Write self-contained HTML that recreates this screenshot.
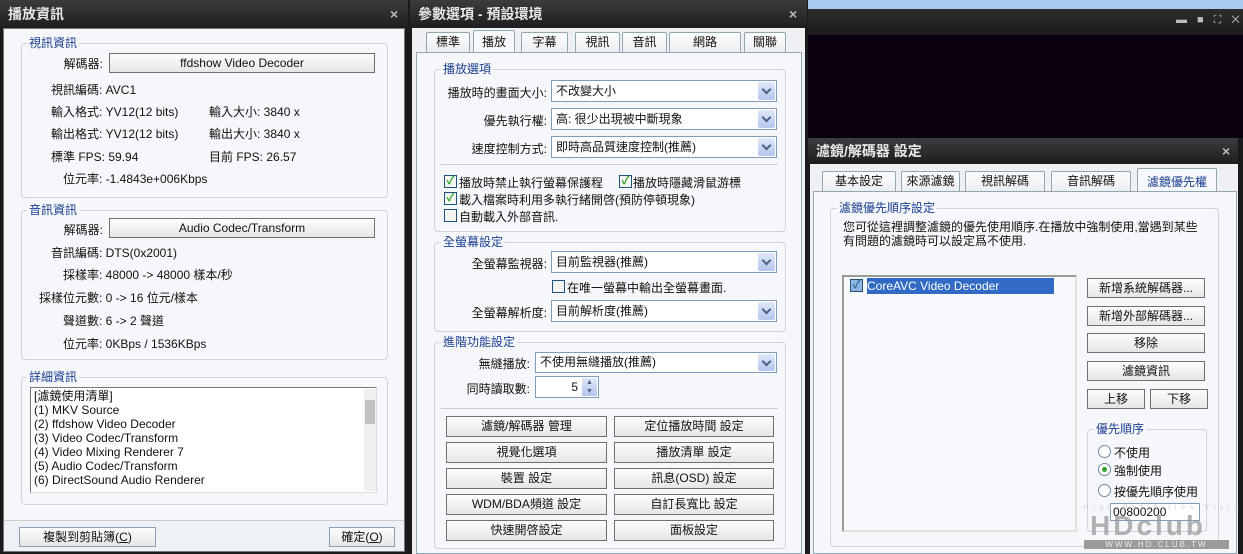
<!DOCTYPE html>
<html><head><meta charset="utf-8"><style>
*{box-sizing:border-box;margin:0;padding:0}
body{width:1243px;height:554px;overflow:hidden;position:relative;background:#1a1a1c;font-family:"Liberation Sans","Noto Sans CJK TC",sans-serif;font-size:12px;color:#111}
.a{position:absolute;white-space:nowrap}
.title{position:absolute;background:linear-gradient(#3c3c3e,#1e1e20);color:#e8e8e8;font-weight:bold;font-size:14px;padding-left:8px;line-height:26px}
.x{position:absolute;color:#bbb;font-size:14px;font-weight:bold}
.body{position:absolute;background:#f5f7fb}
.grp{position:absolute;border:1px solid #cfd3da;border-radius:4px}
.gl{position:absolute;background:#f5f7fb;color:#1b3f8f;padding:0 2px;line-height:14px;white-space:nowrap}
.btn{position:absolute;background:linear-gradient(#fcfcfc,#e6e6e6);border:1px solid #707070;text-align:center;white-space:nowrap;color:#111}
.cb{position:absolute;background:#fff;border:1px solid #7f9db9;padding-left:4px;white-space:nowrap}
.cb i{position:absolute;right:1px;top:1px;bottom:1px;width:17px;background:linear-gradient(#e0e8f8,#b4c6ee);border-radius:2px;font-style:normal}
.cb i:after{content:"";position:absolute;left:5px;top:4px;width:5px;height:5px;border-right:2px solid #4d6185;border-bottom:2px solid #4d6185;transform:rotate(45deg)}
.cb b{position:absolute;right:1px;top:1px;bottom:1px;width:15px;background:linear-gradient(#e0e8f8,#b4c6ee);font-size:7px;line-height:9px;text-align:center;color:#4d6185;font-weight:normal}
.chk{position:absolute;width:13px;height:13px;border:1px solid #1c5180;background:#f4f4f0;font-size:11px;line-height:11px;color:#21a121;text-align:center;font-weight:bold}
.lbl{position:absolute;text-align:right;white-space:nowrap}
.tab{position:absolute;border:1px solid #91a7b4;border-bottom:none;background:linear-gradient(#fdfdfd,#eceef2);text-align:center;line-height:19px;font-size:12px;border-radius:2px 2px 0 0}
.sep{position:absolute;height:1px;background:#c8ccd4}
.r{position:absolute;width:13px;height:13px;border-radius:50%;border:1px solid #6f8aa6;background:#fff}
</style></head><body>

<!-- Window 1 -->
<div class="title" style="left:0;top:0;width:408px;height:28px;line-height:28px">播放資訊</div>
<div class="x" style="left:390px;top:6px">×</div>
<div class="body" style="left:3px;top:28px;width:402px;height:524px;border:1px solid #777"></div>
<div class="grp" style="left:21px;top:43px;width:367px;height:155px"></div>
<div class="gl" style="left:27px;top:36px">視訊資訊</div>
<div class="lbl" style="left:40px;width:63px;top:55px">解碼器:</div>
<div class="btn" style="left:109px;top:53px;width:266px;height:20px;line-height:18px">ffdshow Video Decoder</div>
<div class="a" style="left:51px;top:81px">視訊編碼: AVC1</div>
<div class="a" style="left:51px;top:103px">輸入格式: YV12(12 bits)</div>
<div class="a" style="left:209px;top:103px">輸入大小: 3840 x</div>
<div class="a" style="left:51px;top:125px">輸出格式: YV12(12 bits)</div>
<div class="a" style="left:209px;top:125px">輸出大小: 3840 x</div>
<div class="a" style="left:51px;top:148px">標準 FPS: 59.94</div>
<div class="a" style="left:209px;top:148px">目前 FPS: 26.57</div>
<div class="a" style="left:63px;top:170px">位元率: -1.4843e+006Kbps</div>

<div class="grp" style="left:21px;top:210px;width:367px;height:150px"></div>
<div class="gl" style="left:27px;top:203px">音訊資訊</div>
<div class="lbl" style="left:40px;width:63px;top:221px">解碼器:</div>
<div class="btn" style="left:109px;top:218px;width:266px;height:20px;line-height:18px">Audio Codec/Transform</div>
<div class="a" style="left:51px;top:244px">音訊編碼: DTS(0x2001)</div>
<div class="a" style="left:63px;top:266px">採樣率: 48000 -&gt; 48000 樣本/秒</div>
<div class="a" style="left:39px;top:289px">採樣位元數: 0 -&gt; 16 位元/樣本</div>
<div class="a" style="left:63px;top:312px">聲道數: 6 -&gt; 2 聲道</div>
<div class="a" style="left:63px;top:335px">位元率: 0KBps / 1536KBps</div>

<div class="grp" style="left:21px;top:377px;width:367px;height:128px"></div>
<div class="gl" style="left:27px;top:370px">詳細資訊</div>
<div class="a" style="left:30px;top:387px;width:347px;height:106px;background:#fff;border:1px solid #7a7a7a;border-right-color:#ddd;border-bottom-color:#ddd"></div>
<div class="a" style="left:364px;top:389px;width:12px;height:102px;background:#f0f0f0"></div>
<div class="a" style="left:365px;top:400px;width:10px;height:24px;background:#c0c0c0"></div>
<div class="a" style="left:34px;top:389px;line-height:14px">[濾鏡使用清單]<br>(1) MKV Source<br>(2) ffdshow Video Decoder<br>(3) Video Codec/Transform<br>(4) Video Mixing Renderer 7<br>(5) Audio Codec/Transform<br>(6) DirectSound Audio Renderer</div>
<div class="a" style="left:4px;top:520px;width:400px;height:31px;background:#eef1f6;border-top:1px solid #ccc"></div>
<div class="btn" style="left:19px;top:527px;width:137px;height:20px;line-height:18px;border-color:#8a9fb5">複製到剪貼簿(<u>C</u>)</div>
<div class="btn" style="left:329px;top:527px;width:66px;height:20px;line-height:18px;border-color:#8a9fb5">確定(<u>O</u>)</div>

<!-- Window 2 -->
<div class="title" style="left:410px;top:0;width:397px;height:28px;line-height:28px">參數選項 - 預設環境</div>
<div class="x" style="left:789px;top:6px">×</div>
<div class="body" style="left:412px;top:28px;width:393px;height:526px;background:#eef0f4"></div>
<div class="tab" style="left:426px;top:32px;width:44px">標準</div>
<div class="tab" style="left:473px;top:30px;width:42px;height:23px;background:#f7f8fb;line-height:23px">播放</div>
<div class="tab" style="left:521px;top:32px;width:47px">字幕</div>
<div class="tab" style="left:575px;top:32px;width:45px">視訊</div>
<div class="tab" style="left:622px;top:32px;width:45px">音訊</div>
<div class="tab" style="left:669px;top:32px;width:72px">網路</div>
<div class="tab" style="left:744px;top:32px;width:42px">關聯</div>
<div class="body" style="left:416px;top:52px;width:386px;height:502px;border:1px solid #91a7b4"></div>

<div class="grp" style="left:434px;top:69px;width:352px;height:163px"></div>
<div class="gl" style="left:441px;top:62px">播放選項</div>
<div class="lbl" style="left:430px;width:117px;top:84px">播放時的畫面大小:</div>
<div class="cb" style="left:551px;top:80px;width:226px;height:22px;line-height:20px">不改變大小<i></i></div>
<div class="lbl" style="left:430px;width:117px;top:112px">優先執行權:</div>
<div class="cb" style="left:551px;top:108px;width:226px;height:22px;line-height:20px">高: 很少出現被中斷現象<i></i></div>
<div class="lbl" style="left:430px;width:117px;top:140px">速度控制方式:</div>
<div class="cb" style="left:551px;top:136px;width:226px;height:22px;line-height:20px">即時高品質速度控制(推薦)<i></i></div>
<div class="sep" style="left:441px;top:164px;width:337px"></div>
<div class="chk" style="left:444px;top:175px">✓</div><div class="a" style="left:459px;top:174px">播放時禁止執行螢幕保護程</div>
<div class="chk" style="left:619px;top:175px">✓</div><div class="a" style="left:633px;top:174px">播放時隱藏滑鼠游標</div>
<div class="chk" style="left:444px;top:192px">✓</div><div class="a" style="left:459px;top:191px">載入檔案時利用多執行緒開啓(預防停頓現象)</div>
<div class="chk" style="left:444px;top:209px"></div><div class="a" style="left:459px;top:208px">自動載入外部音訊.</div>

<div class="grp" style="left:434px;top:242px;width:352px;height:90px"></div>
<div class="gl" style="left:441px;top:235px">全螢幕設定</div>
<div class="lbl" style="left:430px;width:117px;top:255px">全螢幕監視器:</div>
<div class="cb" style="left:551px;top:251px;width:226px;height:22px;line-height:20px">目前監視器(推薦)<i></i></div>
<div class="chk" style="left:552px;top:280px"></div><div class="a" style="left:567px;top:279px">在唯一螢幕中輸出全螢幕畫面.</div>
<div class="lbl" style="left:430px;width:117px;top:304px">全螢幕解析度:</div>
<div class="cb" style="left:551px;top:300px;width:226px;height:22px;line-height:20px">目前解析度(推薦)<i></i></div>

<div class="grp" style="left:434px;top:342px;width:352px;height:207px"></div>
<div class="gl" style="left:441px;top:335px">進階功能設定</div>
<div class="lbl" style="left:430px;width:100px;top:355px">無縫播放:</div>
<div class="cb" style="left:535px;top:352px;width:242px;height:21px;line-height:19px">不使用無縫播放(推薦)<i></i></div>
<div class="lbl" style="left:430px;width:100px;top:380px">同時讀取數:</div>
<div class="cb" style="left:535px;top:376px;width:64px;height:22px;line-height:20px;text-align:right;padding-right:20px">5<b>▲<br>▼</b></div>
<div class="sep" style="left:441px;top:408px;width:337px"></div>
<div class="btn" style="left:446px;top:416px;width:161px;height:21px;line-height:19px">濾鏡/解碼器 管理</div>
<div class="btn" style="left:614px;top:416px;width:160px;height:21px;line-height:19px">定位播放時間 設定</div>
<div class="btn" style="left:446px;top:442px;width:161px;height:21px;line-height:19px">視覺化選項</div>
<div class="btn" style="left:614px;top:442px;width:160px;height:21px;line-height:19px">播放清單 設定</div>
<div class="btn" style="left:446px;top:468px;width:161px;height:21px;line-height:19px">裝置 設定</div>
<div class="btn" style="left:614px;top:468px;width:160px;height:21px;line-height:19px">訊息(OSD) 設定</div>
<div class="btn" style="left:446px;top:494px;width:161px;height:21px;line-height:19px">WDM/BDA頻道 設定</div>
<div class="btn" style="left:614px;top:494px;width:160px;height:21px;line-height:19px">自訂長寬比 設定</div>
<div class="btn" style="left:446px;top:520px;width:161px;height:21px;line-height:19px">快速開啓設定</div>
<div class="btn" style="left:614px;top:520px;width:160px;height:21px;line-height:19px">面板設定</div>

<!-- Background player -->
<div class="a" style="left:808px;top:0;width:435px;height:9px;background:#a9cbef"></div>
<div class="a" style="left:808px;top:9px;width:435px;height:26px;background:linear-gradient(#2c2c2e,#1c1c1e)"></div>
<div class="a" style="left:1176px;top:14px;color:#bbb;font-size:11px;letter-spacing:10px">▬■⛶✕</div>
<div class="a" style="left:808px;top:35px;width:435px;height:103px;background:#0b0010"></div>

<!-- Window 3 -->
<div class="title" style="left:808px;top:138px;width:432px;height:26px;line-height:26px">濾鏡/解碼器 設定</div>
<div class="x" style="left:1222px;top:143px">×</div>
<div class="body" style="left:810px;top:164px;width:428px;height:390px;background:#eef0f4"></div>
<div class="tab" style="left:822px;top:171px;width:74px">基本設定</div>
<div class="tab" style="left:901px;top:171px;width:59px">來源濾鏡</div>
<div class="tab" style="left:965px;top:171px;width:80px">視訊解碼</div>
<div class="tab" style="left:1051px;top:171px;width:80px">音訊解碼</div>
<div class="tab" style="left:1137px;top:168px;width:80px;height:24px;line-height:26px;background:#f7f8fb;color:#1b3f8f">濾鏡優先權</div>
<div class="body" style="left:813px;top:191px;width:424px;height:363px;border:1px solid #91a7b4"></div>
<div class="grp" style="left:830px;top:208px;width:389px;height:339px"></div>
<div class="gl" style="left:837px;top:201px">濾鏡優先順序設定</div>
<div class="a" style="left:843px;top:220px;line-height:14px">您可從這裡調整濾鏡的優先使用順序.在播放中強制使用,當遇到某些<br>有問題的濾鏡時可以設定爲不使用.</div>
<div class="a" style="left:842px;top:275px;width:235px;height:257px;background:#f8f9fc;border:2px solid #9a9a9a;border-right-color:#e0e0e0;border-bottom-color:#e0e0e0"></div>
<div class="chk" style="left:850px;top:279px;background:#8fb5e0;color:#2c6b9f">✓</div>
<div class="a" style="left:867px;top:278px;width:187px;height:16px;background:#316ac5;color:#fff;line-height:16px">CoreAVC Video Decoder</div>
<div class="btn" style="left:1087px;top:278px;width:118px;height:20px;line-height:18px">新增系統解碼器...</div>
<div class="btn" style="left:1087px;top:306px;width:118px;height:20px;line-height:18px">新增外部解碼器...</div>
<div class="btn" style="left:1087px;top:333px;width:118px;height:20px;line-height:18px">移除</div>
<div class="btn" style="left:1087px;top:361px;width:118px;height:20px;line-height:18px">濾鏡資訊</div>
<div class="btn" style="left:1087px;top:389px;width:58px;height:20px;line-height:18px">上移</div>
<div class="btn" style="left:1150px;top:389px;width:58px;height:20px;line-height:18px">下移</div>
<div class="grp" style="left:1087px;top:429px;width:120px;height:103px"></div>
<div class="gl" style="left:1094px;top:422px">優先順序</div>
<div class="r" style="left:1098px;top:445px"></div><div class="a" style="left:1114px;top:444px">不使用</div>
<div class="r" style="left:1098px;top:463px"></div><div class="a" style="left:1102px;top:467px;width:5px;height:5px;border-radius:50%;background:#2ea62e"></div><div class="a" style="left:1114px;top:462px">強制使用</div>
<div class="r" style="left:1098px;top:484px"></div><div class="a" style="left:1114px;top:483px">按優先順序使用</div>
<div class="a" style="left:1110px;top:503px;width:90px;height:18px;border:1px solid #7f9db9;background:#fff;padding-left:2px;line-height:16px">00800200</div>
<div class="a" style="left:1084px;top:505px;color:#c8c8c8;font-size:6px;letter-spacing:5px">High Definition Vision Club</div>
<div class="a" style="left:1090px;top:510px;color:#9a9a9a;font-size:28px;font-weight:bold;letter-spacing:3px;opacity:.75">HDclub</div>
<div class="a" style="left:1084px;top:540px;width:145px;height:9px;background:#9a9a9a;color:#eee;font-size:8px;line-height:9px;text-align:center;letter-spacing:2px">WWW.HD.CLUB.TW</div>
<div class="a" style="left:1238px;top:138px;width:5px;height:416px;background:#1a1a1c"></div>
</body></html>
